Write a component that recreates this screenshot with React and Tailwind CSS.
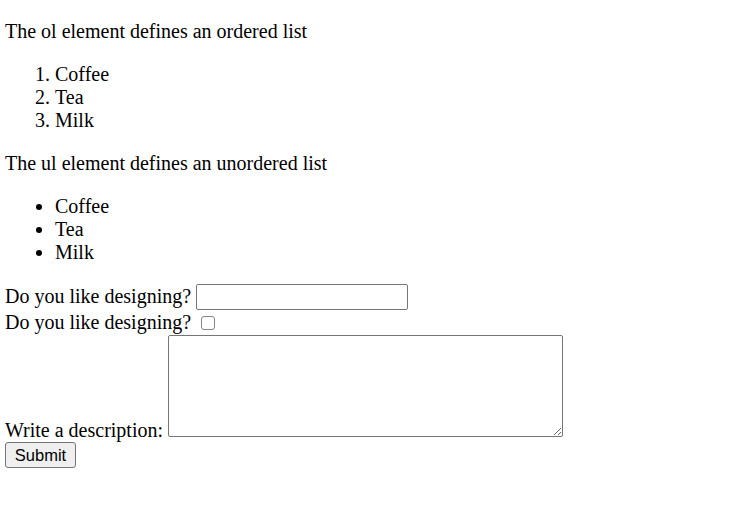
export default function App() {
    return (
        <div className="min-h-[527px] bg-white pl-[5px] pt-[20px] text-[20px] leading-[23px] text-black font-['Liberation_Serif',serif]">
            <p>The ol element defines an ordered list</p>

            <ol className="list-decimal pl-[50px] mt-[20px]">
                <li>Coffee</li>
                <li>Tea</li>
                <li>Milk</li>
            </ol>

            <p className="mt-[20px]">The ul element defines an unordered list</p>

            <ul className="list-disc pl-[50px] mt-[20px]">
                <li>Coffee</li>
                <li>Tea</li>
                <li>Milk</li>
            </ul>

            {/* Form */}
            <form className="mt-[19px]" onSubmit={(e) => e.preventDefault()}>
                <div className="flex items-center h-[27px]">
                    <span>Do you like designing?</span>
                    <input
                        type="text"
                        className="ml-[5px] w-[212px] h-[26px] border border-[#767676] rounded-[2px] bg-white px-1 text-[16px] font-['Liberation_Sans',sans-serif] outline-none"
                    />
                </div>
                <div className="flex items-center h-[23px] pt-[2px]">
                    <span>Do you like designing?</span>
                    <input
                        type="checkbox"
                        className="appearance-none ml-[10px] w-[14px] h-[14px] border border-[#858585] rounded-[3px] bg-white"
                    />
                </div>
                <div className="flex items-end">
                    <span>Write a description:</span>
                    <textarea
                        className="ml-[5px] mt-[2px] mb-[5px] w-[395px] h-[102px] border border-[#767676] rounded-[2px] bg-white resize p-1 text-[16px] font-['Liberation_Mono',monospace] outline-none"
                    />
                </div>
                <button
                    type="submit"
                    className="block w-[71px] h-[26px] bg-[#efefef] border border-[#767676] rounded-[3px] text-[16.5px] leading-none font-['Liberation_Sans',sans-serif] text-black"
                >
                    Submit
                </button>
            </form>
        </div>
    );
}
